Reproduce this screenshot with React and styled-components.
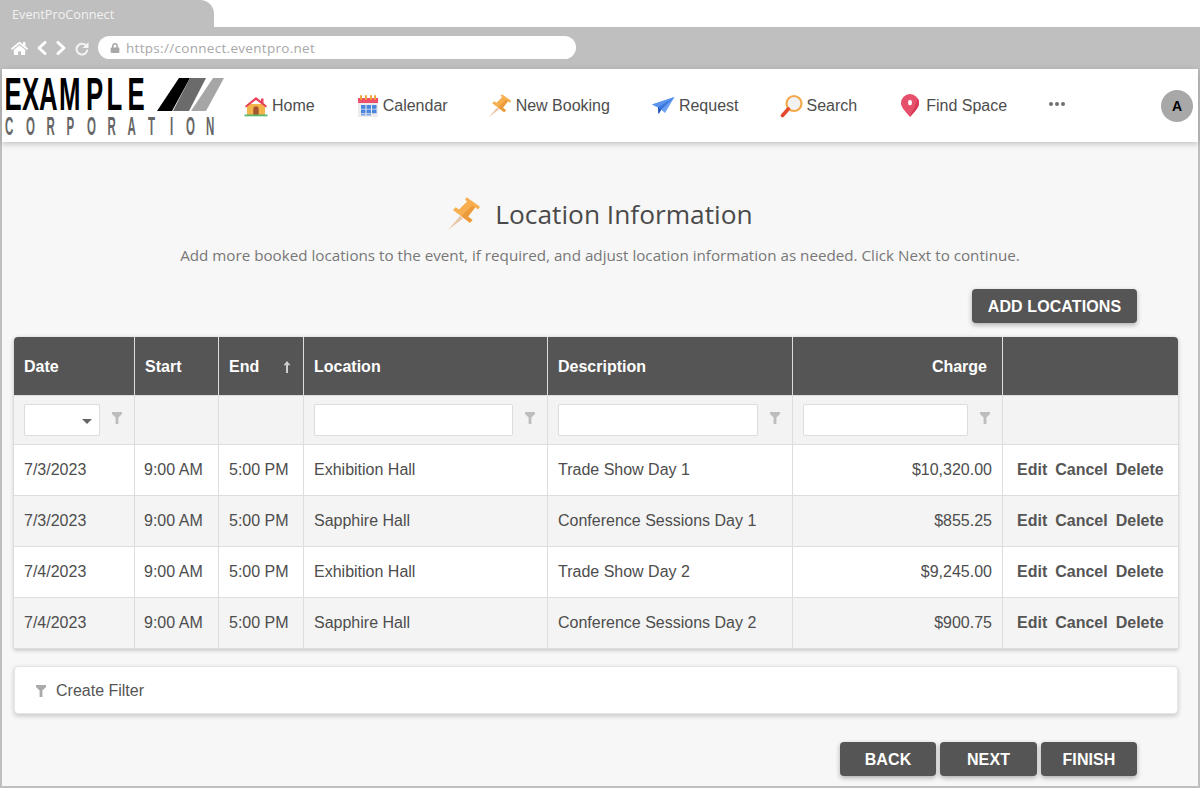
import React from "react";
import styled, { createGlobalStyle } from "styled-components";
import { FaHome, FaLock } from "react-icons/fa";

const Global = createGlobalStyle`
  html, body { margin: 0; padding: 0; background: #fff; }
  body { font-family: "Liberation Sans", Arial, sans-serif; color: #4d4d4d; font-size: 16px; }
  * { box-sizing: border-box; }
`;

const Frame = styled.div`
  width: 1200px; height: 788px; overflow: hidden; display: flex; flex-direction: column; background: #fff;
`;
const TabStrip = styled.div` height: 27px; display: flex; background: #fff; `;
const Tab = styled.div`
  width: 214px; height: 27px; background: #bfbfbf; border-radius: 0 14px 0 0;
  padding: 0 0 0 12px; font: 12.7px/29px "Open Sans", sans-serif; color: #f2f2f2;
`;
const Toolbar = styled.div`
  height: 42px; background: #bfbfbf; display: flex; align-items: center; padding: 0 0 0 11px;
`;
const ChromeIcons = styled.div`
  display: flex; align-items: center; gap: 9px; width: 87px; color: #fff; height: 16px;
`;
const Address = styled.div`
  width: 478px; height: 23px; margin-top: -1px; border-radius: 12px; background: #fff; display: flex; align-items: center; gap: 6px;
  padding-left: 12px; font: 13.5px "Open Sans", sans-serif; letter-spacing: 0.3px; color: #a8a8a8;
`;
const Window = styled.div`
  flex: 1; min-height: 0; margin: 0; border: solid #bfbfbf; border-width: 0 2px 2px; background: #f7f7f7; display: flex; flex-direction: column;
`;
const Header = styled.header`
  height: 73px; background: #fff; display: flex; align-items: center; box-shadow: 0 2px 6px rgba(0,0,0,.22); position: relative;
`;
const Logo = styled.svg` width: 228px; height: 73px; flex: none; display: block; `;
const Nav = styled.nav` display: flex; align-items: center; margin-left: 14px; `;
const NavItem = styled.a`
  display: flex; align-items: center; gap: ${p => p.$gap}px; margin-right: ${p => p.$after}px; color: #4d4d4d; font-size: 16px; line-height: 20px; white-space: nowrap;
`;
const Dots = styled.div`
  display: flex; gap: 2px; margin-top: -4px;
  i { width: 4px; height: 4px; border-radius: 50%; background: #707070; display: block; }
`;
const Avatar = styled.div`
  margin-left: auto; margin-right: 5px; width: 32px; height: 32px; border-radius: 50%; background: #a8a8a8;
  display: flex; align-items: center; justify-content: center; color: #000; font-weight: 700; font-size: 14px;
`;
const TitleRow = styled.div`
  display: flex; justify-content: center; align-items: center; gap: 14px; margin-top: 54px; height: 36px;
`;
const Title = styled.h1`
  margin: 0; font: 400 26.3px/36px "Open Sans", sans-serif; color: #4a4a4a;
`;
const Sub = styled.p`
  margin: 13px 0 0; text-align: center; font: 400 15.2px/20px "Open Sans", sans-serif; color: #777;
`;
const Content = styled.main` padding: 0 20px 0 12px; `;
const Right = styled.div`
  display: flex; justify-content: flex-end; padding-right: ${p => p.$pad}px; margin-top: ${p => p.$top}px; gap: ${p => p.$gap || 0}px;
`;
const Btn = styled.button`
  width: ${p => p.$w}px; height: 34px; border: 0; border-radius: 4px; background: #555; color: #fff; padding: 2px 0 0;
  font: 700 16px "Liberation Sans", sans-serif; letter-spacing: .1px; box-shadow: 0 2px 5px rgba(0,0,0,.3);
`;
const TableWrap = styled.div`
  margin-top: 14px; border-radius: 4px 4px 0 0; box-shadow: 0 1px 4px rgba(0,0,0,.25); overflow: hidden;
`;
const Table = styled.table`
  width: 1164px; table-layout: fixed; border-collapse: separate; border-spacing: 0;
`;
const Th = styled.th`
  height: 59px; padding: 2px ${p => p.$right ? 15 : 10}px 0 10px; background: #555; color: #fff; font-size: 16px; font-weight: 700;
  text-align: ${p => p.$right ? "right" : "left"}; border-right: 1px solid #ddd; border-bottom: 1px solid #ddd;
  &:last-child { border-right: 0; }
`;
const HeadInner = styled.div` display: flex; justify-content: space-between; align-items: center; padding-right: 2px; `;
const FilterCell = styled.td`
  height: 49px; padding: 0 0 0 10px; background: #f3f3f3; border-right: 1px solid #ddd; border-bottom: 1px solid #ddd;
  &:last-child { border-right: 0; }
`;
const FilterInner = styled.div` display: flex; align-items: flex-start; gap: 12px; `;
const FilterBox = styled.div`
  width: ${p => p.$w}px; height: 32px; background: #fff; border: 1px solid #ddd; border-radius: 2px; position: relative; flex: none;
`;
const Caret = styled.span`
  position: absolute; right: 7px; top: 14px; width: 0; height: 0; border: 5px solid transparent; border-top-color: #666; border-bottom: 0;
`;
const Funnel = styled.svg` width: 10px; height: 12px; margin-top: ${p => p.$top}px; flex: none; display: block; `;
const Td = styled.td`
  height: 51px; padding: 0 ${p => p.$right ? 10 : 0}px 0 ${p => p.$left ?? 10}px; font-size: 16px; color: #4d4d4d; white-space: nowrap;
  background: ${p => p.$odd ? "#f4f4f4" : "#fff"}; text-align: ${p => p.$right ? "right" : "left"};
  border-right: 1px solid #ddd; border-bottom: 1px solid #ddd;
  &:last-child { border-right: 0; }
`;
const Actions = styled.div` display: flex; gap: 8px; font-weight: 700; color: #555; padding-left: 4px; `;
const FilterBar = styled.div`
  margin-top: 17px; height: 48px; background: #fff; border: 1px solid #e6e6e6; border-radius: 4px; box-shadow: 0 2px 5px rgba(0,0,0,.2);
  display: flex; align-items: center; gap: 10px; padding: 2px 0 0 21px; color: #555;
`;

const FunnelIcon = ({ color = "#bdbdbd", top = 8 }) => (
  <Funnel $top={top} viewBox="0 0 10 12"><path fill={color} d="M0 0h10v2L6.400 5.500V12H3.600V5.500L0 2z" /></Funnel>
);
const SortArrow = () => (
  <svg width="8" height="12" viewBox="0 0 8 12"><path fill="#cfcfcf" d="M4 0l3.500 4.200H5V12H3V4.200H.5z" /></svg>
);
const Chevron = ({ d }) => (
  <svg width="10" height="14" viewBox="0 0 10 14" fill="none" stroke="#fff" strokeWidth="3" strokeLinecap="round" strokeLinejoin="round"><path d={d} /></svg>
);
const Refresh = () => (
  <svg width="14" height="15" viewBox="0 0 14 15" fill="none">
    <path d="M10.800 4.300A5.400 5.400 0 1012.400 8.500" stroke="#f4f4f4" strokeWidth="2" />
    <path d="M13.500 1v6h-6z" fill="#f4f4f4" />
  </svg>
);
const HomeIcon = () => (
  <svg width="24" height="24" viewBox="0 0 24 24">
    <rect x="3" y="10" width="18" height="11" fill="#f3b54a" />
    <path d="M1 12L12 3l5 4V4.500h2.500v4.500L23 12l-1 1.500L12 6 2 13.500z" fill="#e8425a" />
    <path d="M9.300 21v-6a2.700 2.700 0 015.400 0v6z" fill="#a5552f" />
    <rect x="0.500" y="20.500" width="23" height="1.800" fill="#59b86b" />
  </svg>
);
const CalendarIcon = () => (
  <svg width="22" height="24" viewBox="0 0 22 24">
    <rect x="1" y="4" width="20" height="19" fill="#ececec" />
    <rect x="1" y="4" width="20" height="5" fill="#ee4f6b" />
    {[4, 9, 14, 18].map(x => <rect key={x} x={x - 1} y="1" width="2" height="5" rx="1" fill="#f2a33a" />)}
    {[4, 9.500, 15].flatMap(x => [11, 15.500].map(y => <rect key={x + "-" + y} x={x} y={y} width="4.500" height="3.800" fill="#4a86e0" />))}
    <rect x="4" y="20" width="4.500" height="1.500" fill="#4a86e0" opacity=".7" />
    <rect x="9.500" y="20" width="4.500" height="1.500" fill="#4a86e0" opacity=".7" />
  </svg>
);
const PinIcon = ({ size = 24 }) => (
  <svg width={size} height={size} viewBox="0 0 34 34">
    <path d="M1 33L13 19l3 2.500z" fill="#e7c7a6" />
    <path d="M6 13l2.700-2.800L12 12.500l8.300-8.300L18 2.900 19.700.3 33 9.700l-2 2.700-2.700-2.200L21 19.500l4.500 3.500-2.500 2.700z" fill="#f6ae4e" />
    <path d="M14.500 19.300l11-11 2.800 2L21 19.500l4.500 3.500-2.500 2.700z" fill="#ec9a3a" />
  </svg>
);
const PlaneIcon = () => (
  <svg width="23" height="20" viewBox="0 0 23 20">
    <path d="M0 8.500L22.500 1 13 17l-4.500-4z" fill="#6aa1f4" />
    <path d="M22.500 1L6 11l.5 7 3-4.500z" fill="#3f78dd" />
    <path d="M6 11l.5 7 2.500-4z" fill="#1f4fc0" />
    <path d="M0 8.500L6 11 22.500 1z" fill="#5a94ee" />
  </svg>
);
const SearchIcon = () => (
  <svg width="23" height="24" viewBox="0 0 23 24">
    <circle cx="14" cy="9.500" r="7.500" fill="#f2f2f2" stroke="#f5a94c" strokeWidth="2.200" />
    <path d="M2.500 21.500L8.300 15" stroke="#e2492f" strokeWidth="3.600" strokeLinecap="round" />
  </svg>
);
const MapPinIcon = () => (
  <svg width="20" height="23" viewBox="0 0 20 23">
    <path d="M10 23C4 16 1 13 1 9a9 9 0 0118 0c0 4-3 7-9 14z" fill="#e7506b" />
    <path d="M10 23c6-7 9-10 9-14 0-2-.5-3.500-1.500-5C16 13 10 20 10 23z" fill="#d83a58" />
    <ellipse cx="10" cy="8.500" rx="2" ry="2.700" fill="#fff" />
  </svg>
);

const items = [
  [<HomeIcon key="i" />, "Home", 4, 42], [<CalendarIcon key="i" />, "Calendar", 4, 40], [<PinIcon key="i" />, "New Booking", 4, 42],
  [<PlaneIcon key="i" />, "Request", 4, 41], [<SearchIcon key="i" />, "Search", 4, 43], [<MapPinIcon key="i" />, "Find Space", 6, 42],
];
const rows = [
  ["7/3/2023", "Exhibition Hall", "Trade Show Day 1", "$10,320.00"],
  ["7/3/2023", "Sapphire Hall", "Conference Sessions Day 1", "$855.25"],
  ["7/4/2023", "Exhibition Hall", "Trade Show Day 2", "$9,245.00"],
  ["7/4/2023", "Sapphire Hall", "Conference Sessions Day 2", "$900.75"],
];
const widths = [121, 84, 85, 244, 245, 210, 175];
const toScaled = (list, s) => list.map(v => (v / s).toFixed(1)).join(" ");

export default function App() {
  return (
    <Frame>
      <Global />
      <TabStrip><Tab>EventProConnect</Tab></TabStrip>
      <Toolbar>
        <ChromeIcons>
          <FaHome size={17} />
          <Chevron d="M8 1.500L2 7l6 5.500" />
          <Chevron d="M2 1.500L8 7l-6 5.500" />
          <Refresh />
        </ChromeIcons>
        <Address><FaLock size={10} color="#a8a8a8" />https://connect.eventpro.net</Address>
      </Toolbar>
      <Window>
        <Header>
          <Logo viewBox="2 69 228 73">
            <text transform="translate(0 110) scale(.56 1)" x={toScaled([4.5, 22, 39, 59, 86, 106.5, 127.5], .56)} fontFamily="Liberation Sans" fontWeight="700" fontSize="46" fill="#000">EXAMPLE</text>
            <text transform="translate(0 135) scale(.46 1)" x={toScaled([5, 26, 46.500, 66.5, 87, 107.5, 127.5, 148, 170, 186, 206], .46)} fontFamily="Liberation Sans" fontWeight="700" fontSize="25" fill="#666">CORPORATION</text>
            <path d="M157 111L179 78h11l-18 33z" fill="#000" />
            <path d="M173 111l17-33h16l-17 33z" fill="#6b6b6b" />
            <path d="M191 111l22-33h11l-18 33z" fill="#a6a6a6" />
          </Logo>
          <Nav>
            {items.map(([icon, label, gap, after]) => <NavItem key={label} $gap={gap} $after={after}>{icon}{label}</NavItem>)}
            <Dots><i /><i /><i /></Dots>
          </Nav>
          <Avatar>A</Avatar>
        </Header>
        <TitleRow><PinIcon size={34} /><Title>Location Information</Title></TitleRow>
        <Sub>Add more booked locations to the event, if required, and adjust location information as needed. Click Next to continue.</Sub>
        <Content>
          <Right $pad={41} $top={24}><Btn $w={165}>ADD LOCATIONS</Btn></Right>
          <TableWrap>
            <Table>
              <colgroup>{widths.map((w, i) => <col key={i} style={{ width: w }} />)}</colgroup>
              <thead>
                <tr>
                  <Th>Date</Th>
                  <Th>Start</Th>
                  <Th><HeadInner>End<SortArrow /></HeadInner></Th>
                  <Th>Location</Th>
                  <Th>Description</Th>
                  <Th $right>Charge</Th>
                  <Th />
                </tr>
              </thead>
              <tbody>
                <tr>
                  <FilterCell><FilterInner><FilterBox $w={76}><Caret /></FilterBox><FunnelIcon /></FilterInner></FilterCell>
                  <FilterCell />
                  <FilterCell />
                  <FilterCell><FilterInner><FilterBox $w={199} /><FunnelIcon /></FilterInner></FilterCell>
                  <FilterCell><FilterInner><FilterBox $w={200} /><FunnelIcon /></FilterInner></FilterCell>
                  <FilterCell><FilterInner><FilterBox $w={165} /><FunnelIcon /></FilterInner></FilterCell>
                  <FilterCell />
                </tr>
                {rows.map((r, i) => (
                  <tr key={i}>
                    <Td $odd={i % 2}>{r[0]}</Td>
                    <Td $odd={i % 2} $left={9}>9:00 AM</Td>
                    <Td $odd={i % 2}>5:00 PM</Td>
                    <Td $odd={i % 2}>{r[1]}</Td>
                    <Td $odd={i % 2}>{r[2]}</Td>
                    <Td $odd={i % 2} $right>{r[3]}</Td>
                    <Td $odd={i % 2}><Actions><span>Edit</span><span>Cancel</span><span>Delete</span></Actions></Td>
                  </tr>
                ))}
              </tbody>
            </Table>
          </TableWrap>
          <FilterBar><FunnelIcon color="#aaa" top={0} />Create Filter</FilterBar>
          <Right $pad={41} $top={28} $gap={4}>
            <Btn $w={96}>BACK</Btn><Btn $w={97}>NEXT</Btn><Btn $w={96}>FINISH</Btn>
          </Right>
        </Content>
      </Window>
    </Frame>
  );
}
